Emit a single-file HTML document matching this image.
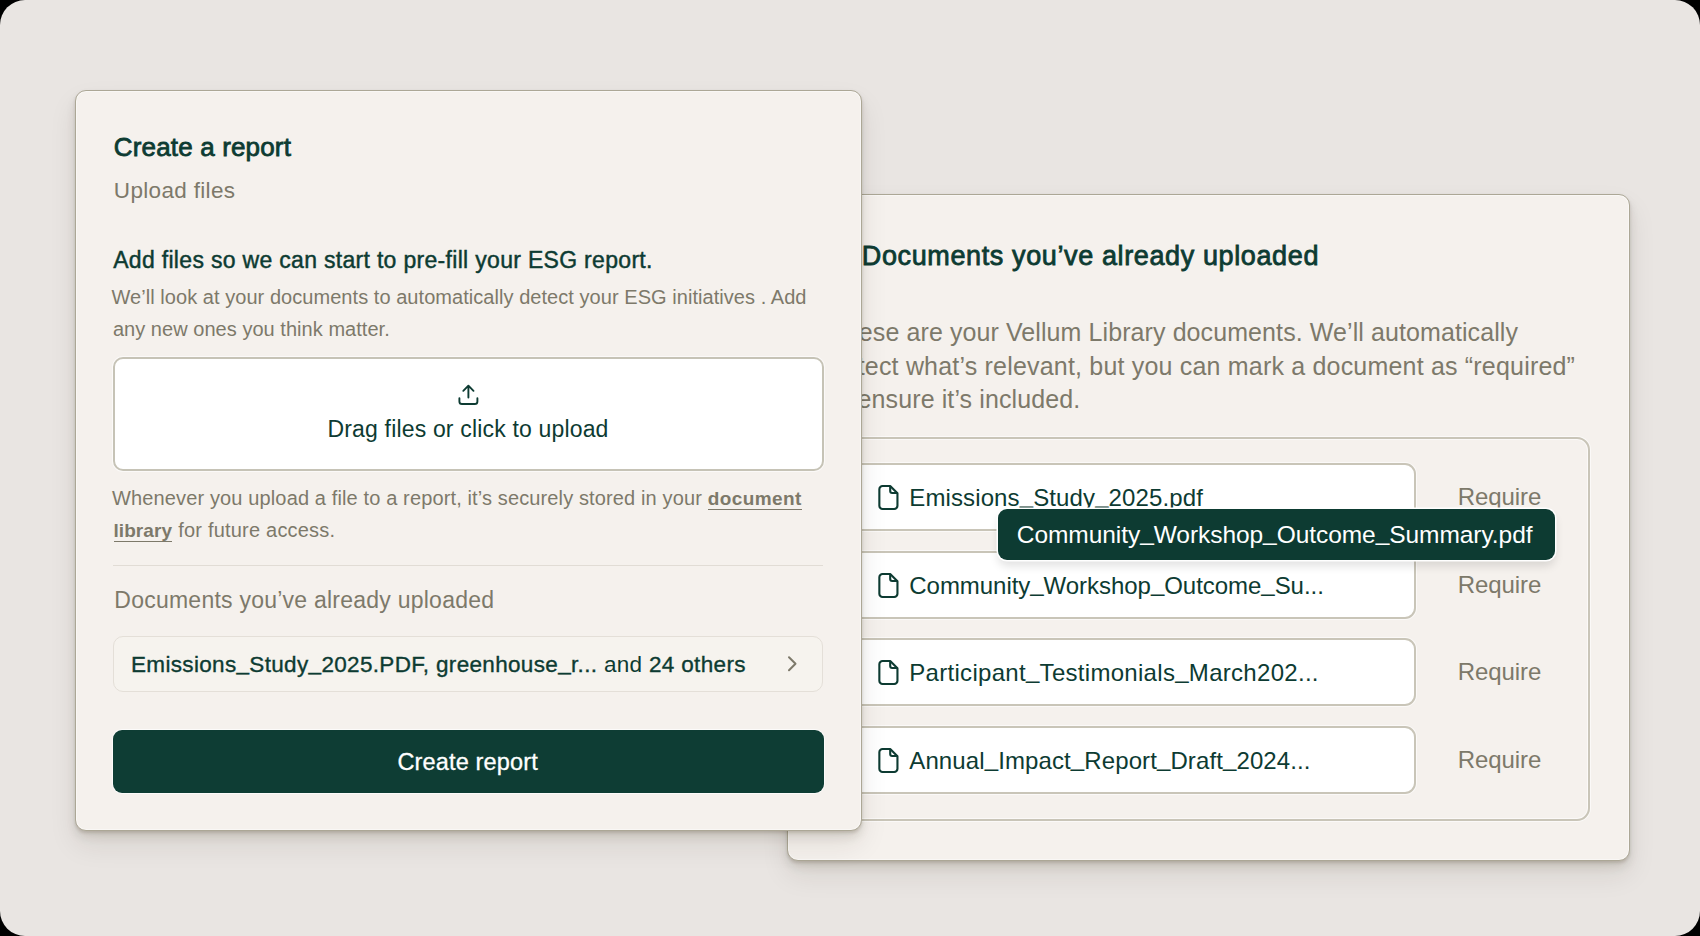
<!DOCTYPE html>
<html><head><meta charset="utf-8">
<style>
html,body{margin:0;padding:0;background:#000;width:1700px;height:936px;overflow:hidden}
*{box-sizing:border-box}
.frame{position:absolute;left:0;top:0;width:1700px;height:936px;border-radius:25px;background:#e9e5e2;overflow:hidden}
.card{position:absolute;background:#f5f1ed;border:1px solid #aca796;border-radius:11px;
 box-shadow:0 2px 3px rgba(40,30,10,0.14), 0 6px 10px rgba(40,30,10,0.10), 0 14px 28px rgba(40,30,10,0.09), inset 0 0 0 1px rgba(255,255,255,0.45);overflow:hidden}
.t{position:absolute;font-family:"Liberation Sans",sans-serif;white-space:pre;line-height:normal}
.ic{position:absolute}
.us{position:relative;top:-2.5px}
.bx{position:absolute}
u{text-decoration:none;border-bottom:1.6px solid #7d796a}
</style></head><body><div class="frame">
<div class="card" style="left:787px;top:194px;width:843px;height:667px;">
<div class="t" style="left:73.8px;top:46.0px;font-size:27px;color:#0d3b32;font-weight:400;letter-spacing:0.62px;-webkit-text-stroke:0.8px #0d3b32">Documents you’ve already uploaded</div>
<div class="t" style="left:41.5px;top:123.0px;font-size:25px;color:#7d796a;font-weight:400;letter-spacing:0.09px;">These are your Vellum Library documents. We’ll automatically</div>
<div class="t" style="left:41.5px;top:156.5px;font-size:25px;color:#7d796a;font-weight:400;letter-spacing:0.19px;">detect what’s relevant, but you can mark a document as “required”</div>
<div class="t" style="left:41.5px;top:190.0px;font-size:25px;color:#7d796a;font-weight:400;letter-spacing:0.1px;">to ensure it’s included.</div>
<div class="bx" style="left:32px;top:241.5px;width:769.5px;height:384.5px;border:2px solid #c9c5b8;border-radius:13px;box-shadow:0 0 0 1px rgba(255,255,255,.6), inset 0 0 0 1px rgba(255,255,255,.6)"></div>
<div class="bx" style="left:44px;top:268px;width:584px;height:68px;background:#fff;border:2px solid #c9c5b8;border-radius:11px;box-shadow:0 0 0 1px rgba(255,255,255,.6)"></div>
<svg class="ic" style="left:89px;top:289px" width="24" height="28" viewBox="0 0 24 28"><path d="M5.55 1.95H13.2L20.45 9.2V21.8a3.2 3.2 0 0 1-3.2 3.2H5.55a3.2 3.2 0 0 1-3.2-3.2V5.15a3.2 3.2 0 0 1 3.2-3.2z" fill="none" stroke="#0d3b32" stroke-width="2.1" stroke-linejoin="round"/><path d="M13.2 1.95V7a2 2 0 0 0 2 2h5.25" fill="none" stroke="#0d3b32" stroke-width="2.1" stroke-linejoin="round"/></svg>
<div class="t" style="left:121.3px;top:288.5px;font-size:24px;color:#0d3b32;font-weight:400;letter-spacing:0.115px;">Emissions<span class="us">_</span>Study<span class="us">_</span>2025.pdf</div>
<div class="t" style="left:669.7px;top:288.0px;font-size:24px;color:#7d796a;font-weight:400;letter-spacing:-0.06px;">Require</div>
<div class="bx" style="left:44px;top:356px;width:584px;height:68px;background:#fff;border:2px solid #c9c5b8;border-radius:11px;box-shadow:0 0 0 1px rgba(255,255,255,.6)"></div>
<svg class="ic" style="left:89px;top:377px" width="24" height="28" viewBox="0 0 24 28"><path d="M5.55 1.95H13.2L20.45 9.2V21.8a3.2 3.2 0 0 1-3.2 3.2H5.55a3.2 3.2 0 0 1-3.2-3.2V5.15a3.2 3.2 0 0 1 3.2-3.2z" fill="none" stroke="#0d3b32" stroke-width="2.1" stroke-linejoin="round"/><path d="M13.2 1.95V7a2 2 0 0 0 2 2h5.25" fill="none" stroke="#0d3b32" stroke-width="2.1" stroke-linejoin="round"/></svg>
<div class="t" style="left:121.3px;top:376.5px;font-size:24px;color:#0d3b32;font-weight:400;letter-spacing:-0.04px;">Community<span class="us">_</span>Workshop<span class="us">_</span>Outcome<span class="us">_</span>Su...</div>
<div class="t" style="left:669.7px;top:376.0px;font-size:24px;color:#7d796a;font-weight:400;letter-spacing:-0.06px;">Require</div>
<div class="bx" style="left:44px;top:443px;width:584px;height:68px;background:#fff;border:2px solid #c9c5b8;border-radius:11px;box-shadow:0 0 0 1px rgba(255,255,255,.6)"></div>
<svg class="ic" style="left:89px;top:464px" width="24" height="28" viewBox="0 0 24 28"><path d="M5.55 1.95H13.2L20.45 9.2V21.8a3.2 3.2 0 0 1-3.2 3.2H5.55a3.2 3.2 0 0 1-3.2-3.2V5.15a3.2 3.2 0 0 1 3.2-3.2z" fill="none" stroke="#0d3b32" stroke-width="2.1" stroke-linejoin="round"/><path d="M13.2 1.95V7a2 2 0 0 0 2 2h5.25" fill="none" stroke="#0d3b32" stroke-width="2.1" stroke-linejoin="round"/></svg>
<div class="t" style="left:121.3px;top:463.5px;font-size:24px;color:#0d3b32;font-weight:400;letter-spacing:0.295px;">Participant<span class="us">_</span>Testimonials<span class="us">_</span>March202...</div>
<div class="t" style="left:669.7px;top:463.0px;font-size:24px;color:#7d796a;font-weight:400;letter-spacing:-0.06px;">Require</div>
<div class="bx" style="left:44px;top:531px;width:584px;height:68px;background:#fff;border:2px solid #c9c5b8;border-radius:11px;box-shadow:0 0 0 1px rgba(255,255,255,.6)"></div>
<svg class="ic" style="left:89px;top:552px" width="24" height="28" viewBox="0 0 24 28"><path d="M5.55 1.95H13.2L20.45 9.2V21.8a3.2 3.2 0 0 1-3.2 3.2H5.55a3.2 3.2 0 0 1-3.2-3.2V5.15a3.2 3.2 0 0 1 3.2-3.2z" fill="none" stroke="#0d3b32" stroke-width="2.1" stroke-linejoin="round"/><path d="M13.2 1.95V7a2 2 0 0 0 2 2h5.25" fill="none" stroke="#0d3b32" stroke-width="2.1" stroke-linejoin="round"/></svg>
<div class="t" style="left:121.3px;top:551.5px;font-size:24px;color:#0d3b32;font-weight:400;letter-spacing:0.106px;">Annual<span class="us">_</span>Impact<span class="us">_</span>Report<span class="us">_</span>Draft<span class="us">_</span>2024...</div>
<div class="t" style="left:669.7px;top:551.0px;font-size:24px;color:#7d796a;font-weight:400;letter-spacing:-0.06px;">Require</div>
<div class="bx" style="left:209.5px;top:314px;width:557.0px;height:51px;background:#0d3b32;border-radius:9px;box-shadow:0 0 0 1.5px #fff, 0 6px 10px rgba(0,0,0,0.12);"></div>
<div class="t" style="left:228.8px;top:325.5px;font-size:24.5px;color:#fff;font-weight:400;letter-spacing:-0.06px;">Community<span class="us">_</span>Workshop<span class="us">_</span>Outcome<span class="us">_</span>Summary.pdf</div>
</div>
<div class="card" style="left:75px;top:90px;width:787px;height:741px;z-index:2">
<div class="t" style="left:37.8px;top:41.0px;font-size:26px;color:#0d3b32;font-weight:400;letter-spacing:0.16px;-webkit-text-stroke:0.8px #0d3b32">Create a report</div>
<div class="t" style="left:37.8px;top:86.5px;font-size:22.5px;color:#7d796a;font-weight:400;letter-spacing:0.33px;">Upload files</div>
<div class="t" style="left:37.2px;top:155.5px;font-size:23px;color:#0d3b32;font-weight:400;letter-spacing:0.31px;-webkit-text-stroke:0.45px #0d3b32">Add files so we can start to pre-fill your ESG report.</div>
<div class="t" style="left:35.5px;top:195.0px;font-size:20px;color:#7d796a;font-weight:400;letter-spacing:0.05px;">We’ll look at your documents to automatically detect your ESG initiatives . Add</div>
<div class="t" style="left:36.9px;top:226.5px;font-size:20px;color:#7d796a;font-weight:400;letter-spacing:0.04px;">any new ones you think matter.</div>
<div class="bx" style="left:37px;top:266px;width:711px;height:114px;background:#fff;border:2px solid #c6c3b6;border-radius:10px;box-shadow:0 0 0 1px rgba(255,255,255,0.6)"></div>
<svg class="ic" style="left:380px;top:291px" width="26" height="26" viewBox="0 0 26 26"><path d="M12.4 3.8V15.6M7.3 8.8l5.1-5.1 5.1 5.1M3.4 16.3v3.1a2.6 2.6 0 0 0 2.6 2.6h12.8a2.6 2.6 0 0 0 2.6-2.6v-3.1" fill="none" stroke="#0d3b32" stroke-width="1.9" stroke-linecap="round" stroke-linejoin="round"/></svg>
<div class="t" style="left:251.5px;top:325.0px;font-size:23px;color:#0d3b32;font-weight:400;letter-spacing:0.17px;">Drag files or click to upload</div>
<div class="t" style="left:36.1px;top:396.0px;font-size:20px;color:#7d796a;font-weight:400;letter-spacing:0.13px;">Whenever you upload a file to a report, it’s securely stored in your</div>
<div class="t" style="left:631.8px;top:397.0px;font-size:19px;color:#7d796a;font-weight:700;letter-spacing:0.39px;"><u>document</u></div>
<div class="t" style="left:37.5px;top:428.5px;font-size:19px;color:#7d796a;font-weight:700;letter-spacing:0.07px;"><u>library</u></div>
<div class="t" style="left:96.5px;top:427.5px;font-size:20px;color:#7d796a;font-weight:400;letter-spacing:0.2px;"> for future access.</div>
<div class="bx" style="left:37px;top:474px;width:710px;height:1px;background:#e1dcd5"></div>
<div class="t" style="left:38.3px;top:496.0px;font-size:23px;color:#7d796a;font-weight:400;letter-spacing:0.24px;">Documents you’ve already uploaded</div>
<div class="bx" style="left:37px;top:545px;width:710px;height:56px;background:#f6f3ee;border:1.5px solid #e4dfd8;border-radius:10px;"></div>
<div class="t" style="left:55.0px;top:561.0px;font-size:22.5px;color:#0d3b32;font-weight:400;letter-spacing:0.33px;-webkit-text-stroke:0.35px #0d3b32">Emissions<span class="us">_</span>Study<span class="us">_</span>2025.PDF, greenhouse<span class="us">_</span>r... <span style="-webkit-text-stroke:0">and</span> 24 others</div>
<svg class="ic" style="left:709px;top:564px" width="14" height="18" viewBox="0 0 14 18"><path d="M4 2.3L10.5 8.75L4 15.2" fill="none" stroke="#7d796a" stroke-width="2" stroke-linecap="round" stroke-linejoin="round"/></svg>
<div class="bx" style="left:37px;top:638.5px;width:710.5px;height:63.0px;background:#0e3d34;border-radius:9px;box-shadow:0 0 0 1px rgba(255,255,255,0.7)"></div>
<div class="t" style="left:321.5px;top:657.5px;font-size:23.5px;color:#fff;font-weight:400;letter-spacing:0.15px;-webkit-text-stroke:0.3px #fff">Create report</div>
</div>
</div></body></html>
